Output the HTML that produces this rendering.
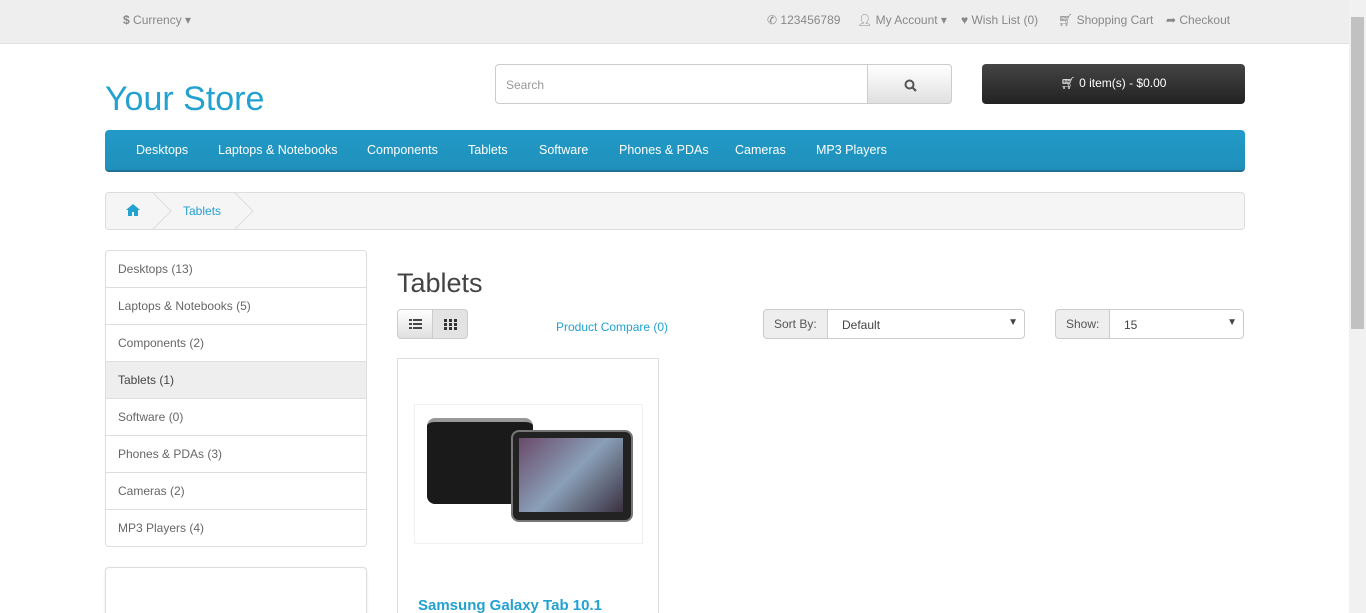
<!DOCTYPE html>
<html style="overflow:hidden;height:613px"><head><meta charset="utf-8"><style>
*{box-sizing:border-box;margin:0;padding:0}
body{width:1366px;height:613px;overflow:hidden;background:#fff;font-family:"Liberation Sans",sans-serif;font-size:12px;color:#666;position:relative}
.a{position:absolute}
#top{left:0;top:0;width:1349px;height:44px;background:#eee;border-bottom:1px solid #e2e2e2}
.tl{color:#888;font-size:12px;top:13px}
#sb{left:1349px;top:0;width:17px;height:613px;background:#f1f1f1}
#sb div{position:absolute;left:2px;top:17px;width:13px;height:312px;background:#c1c1c1}
#logo{left:105px;top:80px;font-size:34px;color:#23a1d1}
#search{left:495px;top:64px;width:373px;height:40px;border:1px solid #ccc;border-radius:4px 0 0 4px;padding:13px 10px;color:#999;font-size:12px}
#sbtn{left:867px;top:64px;width:85px;height:40px;border:1px solid #ccc;border-radius:0 4px 4px 0;background:linear-gradient(#fff,#e0e0e0)}
#cart{left:982px;top:64px;width:263px;height:40px;border-radius:4px;background:linear-gradient(#444,#222);color:#fff;text-align:center;line-height:39px;font-size:12px}
#nav{left:105px;top:130px;width:1140px;height:42px;background:linear-gradient(#229ac8,#1f90bb);border-radius:4px;border-bottom:2px solid #1f6f93}
#nav span{position:absolute;top:13px;color:#fff;font-size:12.5px}
#bc{left:105px;top:192px;width:1140px;height:38px;border:1px solid #ddd;border-radius:4px;background:#f5f5f5}
#list{left:105px;top:250px;width:262px;height:297px;border:1px solid #ddd;border-radius:4px;overflow:hidden}
#list div{height:37px;border-bottom:1px solid #ddd;padding:11px 12px;font-size:12px;color:#666}
#list div.act{background:#eee;color:#444}
#box2{left:105px;top:567px;width:262px;height:46px;border:1px solid #ddd;border-bottom:0;border-radius:4px 4px 0 0;box-shadow:0 1px 2px rgba(0,0,0,.1)}
h1{position:absolute;left:397px;top:268px;font-size:27px;font-weight:normal;color:#444}
.btn{border:1px solid #ccc;background:linear-gradient(#fff,#e0e0e0)}
.lbl{background:#eee;border:1px solid #ccc;padding:7px 10px;color:#555}
.sel{border:1px solid #ccc;padding:8px 14px;color:#444;background:#fff}
#card{left:397px;top:358px;width:262px;height:255px;border:1px solid #ddd;border-bottom:0}
</style></head><body>
<div class="a" id="top"></div>
<div class="a tl" style="left:123px;top:13px"><b>$</b> Currency ▾</div>
<div class="a tl" style="left:767px">✆ 123456789</div>
<div class="a tl" style="left:857px">👤︎ My Account ▾</div>
<div class="a tl" style="left:961px">♥ Wish List (0)</div>
<div class="a tl" style="left:1058px">🛒︎ Shopping Cart</div>
<div class="a tl" style="left:1166px">➦ Checkout</div>
<div class="a" id="sb"><div></div></div>
<div class="a" id="logo">Your Store</div>
<div class="a" id="search">Search</div>
<div class="a" id="sbtn"><svg style="position:absolute;left:36px;top:14px" width="13" height="13" viewBox="0 0 13 13"><circle cx="5.5" cy="5.5" r="4" fill="none" stroke="#555" stroke-width="2"/><path d="M8.5 8.5L12 12" stroke="#555" stroke-width="2.2"/></svg></div>
<div class="a" id="cart">🛒︎ 0 item(s) - $0.00</div>
<div class="a" id="nav">
<span style="left:31px">Desktops</span><span style="left:113px">Laptops &amp; Notebooks</span><span style="left:262px">Components</span><span style="left:363px">Tablets</span><span style="left:434px">Software</span><span style="left:514px">Phones &amp; PDAs</span><span style="left:630px">Cameras</span><span style="left:711px">MP3 Players</span>
</div>
<div class="a" id="bc">
<svg style="position:absolute;left:20px;top:11px" width="14" height="12" viewBox="0 0 14 12"><path d="M7 0L0 6h2v6h4V8h2v4h4V6h2z" fill="#23a1d1"/></svg>
<svg style="position:absolute;left:46px;top:-1px" width="20" height="38"><path d="M0 0L19 19L0 38" fill="none" stroke="#ddd"/></svg>
<span style="position:absolute;left:77px;top:11px;color:#23a1d1">Tablets</span>
<svg style="position:absolute;left:128px;top:-1px" width="20" height="38"><path d="M0 0L19 19L0 38" fill="none" stroke="#ddd"/></svg>
</div>
<div class="a" id="list">
<div>Desktops (13)</div><div>Laptops &amp; Notebooks (5)</div><div>Components (2)</div><div class="act">Tablets (1)</div><div>Software (0)</div><div>Phones &amp; PDAs (3)</div><div>Cameras (2)</div><div style="border:0">MP3 Players (4)</div>
</div>
<div class="a" id="box2"></div>
<h1>Tablets</h1>
<div class="a btn" style="left:397px;top:309px;width:36px;height:30px;border-radius:4px 0 0 4px"><svg style="position:absolute;left:11px;top:9px" width="13" height="11"><path d="M0 0h3v2H0zM4 0h9v2H4zM0 4h3v2H0zM4 4h9v2H4zM0 8h3v2H0zM4 8h9v2H4z" fill="#444"/></svg></div>
<div class="a btn" style="left:432px;top:309px;width:36px;height:30px;border-radius:0 4px 4px 0;background:#e3e3e3"><svg style="position:absolute;left:11px;top:9px" width="13" height="11"><path d="M0 0h3v3H0zM5 0h3v3H5zM10 0h3v3h-3zM0 4h3v3H0zM5 4h3v3H5zM10 4h3v3h-3zM0 8h3v3H0zM5 8h3v3H5zM10 8h3v3h-3z" fill="#333"/></svg></div>
<div class="a" style="left:556px;top:320px;color:#23a1d1">Product Compare (0)</div>
<div class="a lbl" style="left:763px;top:309px;height:30px;border-radius:4px 0 0 4px">Sort By:</div>
<div class="a sel" style="left:827px;top:309px;width:198px;height:30px;border-radius:0 4px 4px 0">Default<span style="position:absolute;right:6px;top:7px;font-size:10px">▼</span></div>
<div class="a lbl" style="left:1055px;top:309px;height:30px;border-radius:4px 0 0 4px">Show:</div>
<div class="a sel" style="left:1109px;top:309px;width:135px;height:30px;border-radius:0 4px 4px 0">15<span style="position:absolute;right:6px;top:7px;font-size:10px">▼</span></div>
<div class="a" id="card">
<div style="position:absolute;left:16px;top:45px;width:229px;height:140px;border:1px solid #f0f0f0;background:#fff">
<div style="position:absolute;left:12px;top:13px;width:106px;height:86px;background:#1a1a1a;border-radius:8px;border-top:4px solid #999"></div>
<div style="position:absolute;left:96px;top:25px;width:122px;height:92px;background:#222;border-radius:8px;border:2px solid #777"><div style="position:absolute;left:6px;top:6px;width:104px;height:74px;background:linear-gradient(135deg,#6a4a6a,#8aa0b8 50%,#3a3040)"></div></div>
</div>
<div style="position:absolute;left:20px;top:238px;color:#23a1d1;font-weight:bold;font-size:15px">Samsung Galaxy Tab 10.1</div>
</div>
</body></html>
